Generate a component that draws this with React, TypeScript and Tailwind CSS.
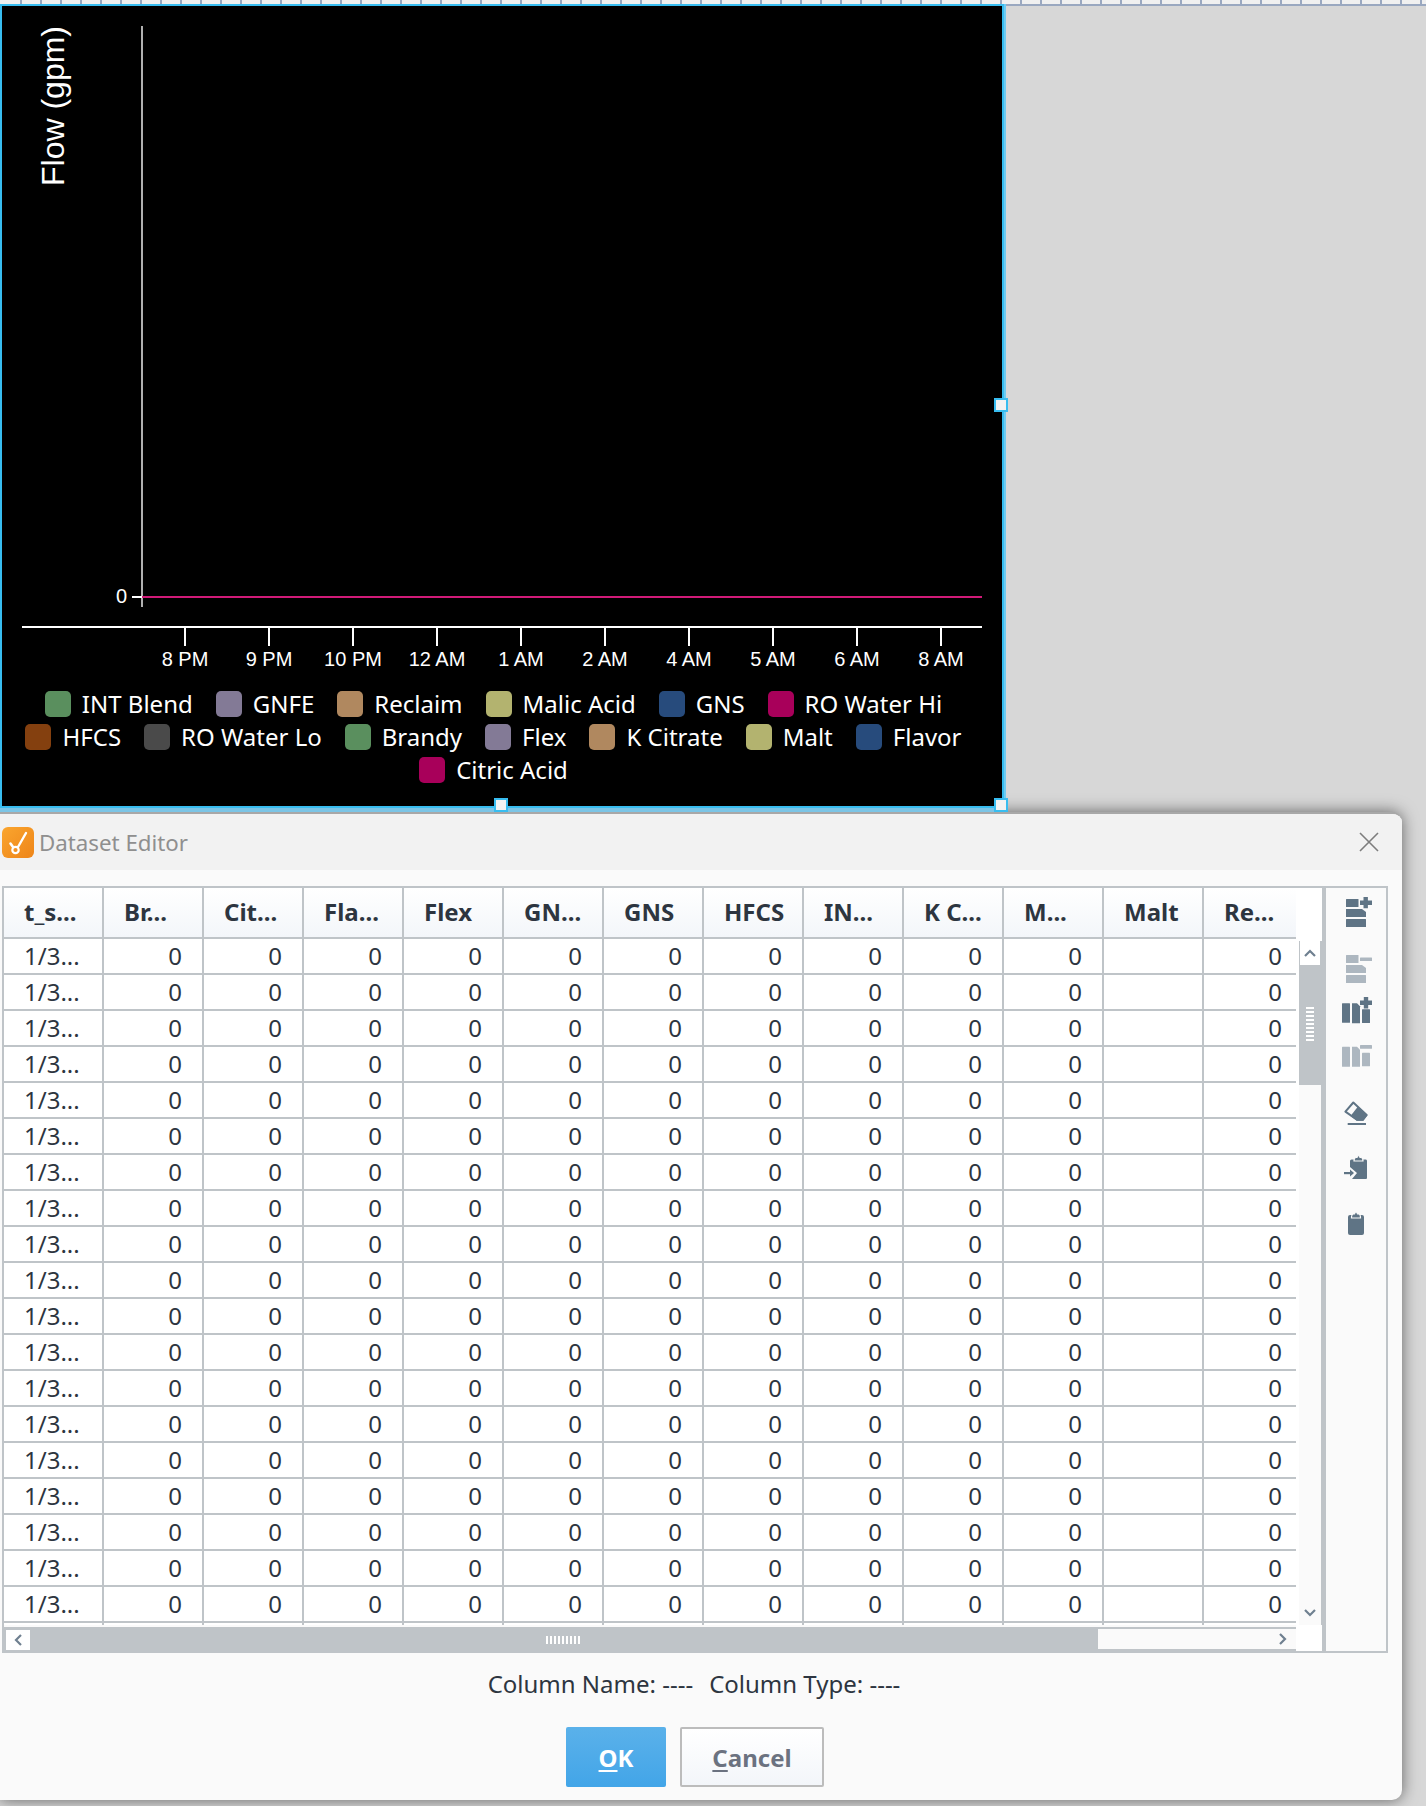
const COLS = ["t_s...", "Br...", "Cit...", "Fla...", "Flex", "GN...", "GNS", "HFCS", "IN...", "K C...", "M...", "Malt", "Re..."];
const XTICKS: [number, string][] = [[183, "8 PM"], [267, "9 PM"], [351, "10 PM"], [435, "12 AM"], [519, "1 AM"], [603, "2 AM"], [687, "4 AM"], [771, "5 AM"], [855, "6 AM"], [939, "8 AM"]];
const GREEN = "bg-[#5a8f5e]", PURPLE = "bg-[#837a96]", TAN = "bg-[#b0885f]", OLIVE = "bg-[#b3b36f]", NAVY = "bg-[#274b7c]", MAGENTA = "bg-[#a8005a]";
const LEGEND: [string, string][][] = [
  [[GREEN, "INT Blend"], [PURPLE, "GNFE"], [TAN, "Reclaim"], [OLIVE, "Malic Acid"], [NAVY, "GNS"], [MAGENTA, "RO Water Hi"]],
  [["bg-[#84400f]", "HFCS"], ["bg-[#4a4a4a]", "RO Water Lo"], [GREEN, "Brandy"], [PURPLE, "Flex"], [TAN, "K Citrate"], [OLIVE, "Malt"], [NAVY, "Flavor"]],
  [[MAGENTA, "Citric Acid"]],
];
const ICON = "#5f7485";
const ICON_OFF = "#adb7c0";

function Handle({ className }: { className: string }) {
  return <div className={"absolute w-[14px] h-[14px] bg-[#f2f2f2] border-2 border-[#38bdf0] " + className} />;
}

function Chart() {
  return (
    <svg width="1000" height="685" className="block font-['Liberation_Sans',sans-serif]">
      <text transform="translate(62 180) rotate(-90)" fontSize="32" fill="#fff">Flow (gpm)</text>
      <rect x="139" y="20" width="2" height="581" fill="#b0b0b0" />
      <rect x="130" y="590" width="10" height="2" fill="#fff" />
      <text x="125" y="597" fontSize="20" fill="#fff" textAnchor="end">0</text>
      <rect x="140" y="590" width="840" height="2" fill="#d01a78" />
      <rect x="20" y="620" width="960" height="2" fill="#fff" />
      {XTICKS.map(([x, label]) => (
        <g key={label}>
          <rect x={x - 1} y="621" width="2" height="19" fill="#fff" />
          <text x={x} y="660" fontSize="20" fill="#fff" textAnchor="middle">{label}</text>
        </g>
      ))}
    </svg>
  );
}

function Legend() {
  return (
    <div className="flex flex-col gap-[7px] pr-[17px] font-['Noto_Sans',sans-serif] text-[24px] text-white">
      {LEGEND.map((row, i) => (
        <div key={i} className="flex justify-center gap-x-[23px] h-[26px]">
          {row.map(([c, t]) => (
            <div key={t} className="flex items-center gap-x-[11px]">
              <div className={"w-[26px] h-[26px] rounded-[5px] " + c} />
              <span className="leading-[26px] whitespace-nowrap">{t}</span>
            </div>
          ))}
        </div>
      ))}
    </div>
  );
}

function Grid() {
  const rows = Array.from({ length: 19 });
  return (
    <div className="w-[1292px] h-[737px] overflow-hidden bg-white">
      <div className="w-[1300px]">
        <div className="flex h-[51px] border-b-2 border-[#bfc4c8] bg-gradient-to-b from-white to-[#f3f6fa]">
          {COLS.map((c, i) => (
            <div key={i} className="w-[100px] shrink-0 border-r-2 border-[#bfc4c8] pl-[20px] pb-[2px] flex items-center font-bold text-[24px] text-[#2d3540]">{c}</div>
          ))}
        </div>
        {rows.map((_, r) => (
          <div key={r} className="flex h-[36px] border-b-2 border-[#bfc4c8]">
            {COLS.map((c, i) => (
              <div key={i} className={"w-[100px] shrink-0 border-r-2 border-[#bfc4c8] flex items-center text-[24px] text-[#2d3540] " + (i === 0 ? "pl-[20px]" : "justify-end pr-[20px]")}>
                {i === 0 ? "1/3..." : c === "Malt" ? "" : "0"}
              </div>
            ))}
          </div>
        ))}
        <div className="flex h-[36px]">
          {COLS.map((c, i) => <div key={i} className="w-[100px] shrink-0 border-r-2 border-[#bfc4c8]" />)}
        </div>
      </div>
    </div>
  );
}

function Chev({ d }: { d: string }) {
  return (
    <svg width="16" height="16" viewBox="0 0 16 16" className="block">
      <path d={d} fill="none" stroke="#6f8090" strokeWidth="2.2" />
    </svg>
  );
}

function VScroll() {
  return (
    <div className="w-[26px] h-[737px] flex flex-col bg-white">
      <div className="h-[53px] bg-white" />
      <div className="flex-1 flex flex-col w-[24px] ml-[3px] mr-[-1px] bg-[#fafafa] border-r-[2px] border-[#bfc4c8]">
        <div className="h-[144px] bg-[#bfc4c8] flex flex-col items-center">
          <div className="w-[20px] h-[24px] bg-white flex items-center justify-center"><Chev d="M3 11 L8 6 L13 11" /></div>
          <div className="mt-[42px] flex flex-col gap-[2px]">
            {Array.from({ length: 9 }).map((_, i) => <div key={i} className="w-[8px] h-[2px] bg-white" />)}
          </div>
        </div>
        <div className="flex-1 flex items-end justify-center pb-[5px]"><Chev d="M3 6 L8 11 L13 6" /></div>
      </div>
    </div>
  );
}

function HScroll() {
  return (
    <div className="flex h-[26px] mt-[2px]">
      <div className="w-[1094px] h-[26px] bg-[#bfc4c8] flex items-center">
        <div className="w-[24px] h-[20px] ml-[2px] pl-[2px] bg-white flex items-center justify-center"><Chev d="M10 3 L5 8 L10 13" /></div>
        <div className="ml-[516px] flex gap-[2px]">
          {Array.from({ length: 9 }).map((_, i) => <div key={i} className="w-[2px] h-[8px] bg-white" />)}
        </div>
      </div>
      <div className="w-[198px] h-[26px] bg-[#bfc4c8] pt-[2px] pb-[4px]">
        <div className="h-[20px] bg-[#fafafa] flex items-center justify-end pr-[6px]"><Chev d="M6 3 L11 8 L6 13" /></div>
      </div>
      <div className="w-[26px] h-[26px] -mt-[2px] bg-white" />
    </div>
  );
}

function Icons() {
  const box = { width: 30, height: 30, viewBox: "0 0 30 30", className: "block overflow-visible shrink-0" };
  const Rows = ({ c }: { c: string }) => (
    <g fill={c}>
      <rect x="4" y="1" width="12.5" height="8" rx="0.5" />
      <path d="M4 11 H20 L24 14 V19 H4 Z" />
      <rect x="4" y="21" width="20" height="8" rx="0.5" />
    </g>
  );
  const Cols = ({ c, top }: { c: string; top: number }) => (
    <g fill={c}>
      <rect x="0" y={top} width="8" height={top > 6 ? 19.4 : 20} rx="0.5" />
      <path d={`M10 ${top} H15 L18 ${top + 3} V${top + 20} H10 Z`} />
      <rect x="20" y={top + 6} width="8" height="13.6" rx="0.5" />
    </g>
  );
  return (
    <div className="w-[60px] flex flex-col items-center pt-[10px] pl-[2px]">
      <svg {...box}><Rows c={ICON} /><path d="M23.7 -1 V10.3 M18 4.7 H30" stroke={ICON} strokeWidth="4.4" /></svg>
      <svg {...box} className="block overflow-visible shrink-0 mt-[26px]"><Rows c={ICON_OFF} /><rect x="18" y="3.4" width="12" height="3.6" rx="0.5" fill={ICON_OFF} /></svg>
      <svg {...box} className="block overflow-visible shrink-0 mt-[12px]"><Cols c={ICON} top={7.3} /><path d="M24 1 V12.4 M18 6.7 H30" stroke={ICON} strokeWidth="4.4" /></svg>
      <svg {...box} className="block overflow-visible shrink-0 mt-[15px]"><Cols c={ICON_OFF} top={5.7} /><rect x="18" y="4" width="12" height="3.8" rx="0.5" fill={ICON_OFF} /></svg>
      <svg {...box} className="block overflow-visible shrink-0 mt-[27px]">
        <path d="M11.3 4.5 L24.6 17 L20.8 21.8 H15 L3.4 13.6 Z" fill="none" stroke={ICON} strokeWidth="2" strokeLinejoin="round" />
        <path d="M16 8.5 L25.7 17 L21.3 22.7 H14.7 L8.5 18 Z" fill={ICON} />
        <rect x="5.7" y="25" width="18.3" height="2" fill={ICON} />
      </svg>
      <svg {...box} className="block overflow-visible shrink-0 mt-[25px]">
        <path d="M8 8 Q8 6.5 9.5 6.5 H24 Q25 6.5 25 8 V25 Q25 26 24 26 H10 L15 20 L8 14 Z" fill={ICON} />
        <path d="M12 8 Q12 4.5 14 4.5 H15 Q15.5 2.6 16.5 2.6 Q17.6 2.6 18 4.5 H19 Q21 4.5 21 8 Z" fill={ICON} stroke="#fafafa" strokeWidth="1.2" />
        <rect x="2" y="19" width="8" height="2.2" fill={ICON} />
        <path d="M8 16.5 L12 20 L8 23.5 Z" fill={ICON} />
      </svg>
      <svg {...box} className="block overflow-visible shrink-0 mt-[26px]">
        <rect x="6" y="6" width="16" height="20" rx="2" fill={ICON} />
        <path d="M9.5 9 Q9.5 5 11.5 5 H12.5 Q13 3 14 3 Q15 3 15.5 5 H16.5 Q18.5 5 18.5 9 Z" fill={ICON} stroke="#fafafa" strokeWidth="1.2" />
      </svg>
    </div>
  );
}

function Logo() {
  return (
    <div className="w-[32px] h-[31px] rounded-[6px] bg-gradient-to-br from-[#faa52e] to-[#ee8518] shrink-0">
      <svg width="32" height="31" viewBox="0 0 32 31" className="block">
        <path d="M24 6 L16 20" stroke="#fff" strokeWidth="2.4" strokeLinecap="round" />
        <circle cx="13.5" cy="23" r="3.2" fill="none" stroke="#fff" strokeWidth="2.2" />
        <path d="M8.5 16.5 L11 20" stroke="#fff" strokeWidth="2.6" strokeLinecap="round" />
      </svg>
    </div>
  );
}

export default function App() {
  return (
    <div className="relative w-[1426px] h-[1806px] overflow-hidden bg-[#d7d7d7] font-['Noto_Sans',sans-serif]">
      <div className="relative z-10 flex h-[6px] overflow-hidden bg-[#f0f0f0] border-b-2 border-[#9aa8c0]">
        {Array.from({ length: 72 }).map((_, i) => (
          <div key={i} className={"h-[4px] shrink-0 border-r-2 border-[#9aa8c0] " + (i === 0 ? "w-[22px]" : "w-[20px]")} />
        ))}
      </div>
      <div className="relative z-10 w-[1006px] h-[808px] -mt-[2px] bg-[#7cc5e6]">
        <div className="w-[1004px] h-[804px] border-2 border-[#38bdf0] bg-black">
          <Chart />
          <Legend />
        </div>
        <div className="absolute top-0 right-0 w-[2px] h-[804px] bg-[#70ccf2]" />
        <Handle className="left-[994px] top-[394px]" />
        <Handle className="left-[494px] top-[794px]" />
        <Handle className="left-[994px] top-[794px]" />
      </div>
      <div className="relative w-[1402px] h-[988px] bg-[#fafafa] border-t-2 border-[#a8a8a8] rounded-r-[10px] shadow-[0_0_16px_rgba(0,0,0,0.55)] overflow-hidden">
        <div className="flex items-center h-[56px] bg-[#f2f2f2] pl-[2px]">
          <Logo />
          <span className="ml-[5px] mt-[2px] text-[22.3px] text-[#8f8f8f]">Dataset Editor</span>
          <svg width="24" height="24" viewBox="0 0 24 24" className="ml-auto mr-[21px] block">
            <path d="M3 3 L21 21 M21 3 L3 21" stroke="#7d7d7d" strokeWidth="1.6" />
          </svg>
        </div>
        <div className="flex mt-[16px] ml-[2px] w-[1386px] h-[767px] border-2 border-[#bfc4c8]">
          <div className="w-[1318px] flex flex-col">
            <div className="flex">
              <Grid />
              <VScroll />
            </div>
            <HScroll />
          </div>
          <div className="border-l-[4px] border-[#bfc4c8] bg-[#fafafa]">
            <Icons />
          </div>
        </div>
        <div className="w-[1388px] h-[62px] flex items-center justify-center gap-[16px] text-[24px] text-[#2d3540]">
          <span>Column Name: ----</span>
          <span>Column Type: ----</span>
        </div>
        <div className="w-[1390px] mt-[12px] flex justify-center gap-[14px]">
          <div className="w-[100px] h-[60px] pt-[2px] rounded-[2px] bg-gradient-to-b from-[#5ab1ea] to-[#42a5e8] flex items-center justify-center font-bold text-[24px] text-white">
            <span><span className="underline underline-offset-[3px]">O</span>K</span>
          </div>
          <div className="w-[144px] h-[60px] pt-[2px] rounded-[2px] border-2 border-[#bcbcbc] bg-gradient-to-b from-white to-[#f3f6fa] flex items-center justify-center font-bold text-[24px] text-[#6b7280]">
            <span><span className="underline underline-offset-[3px]">C</span>ancel</span>
          </div>
        </div>
      </div>
    </div>
  );
}
